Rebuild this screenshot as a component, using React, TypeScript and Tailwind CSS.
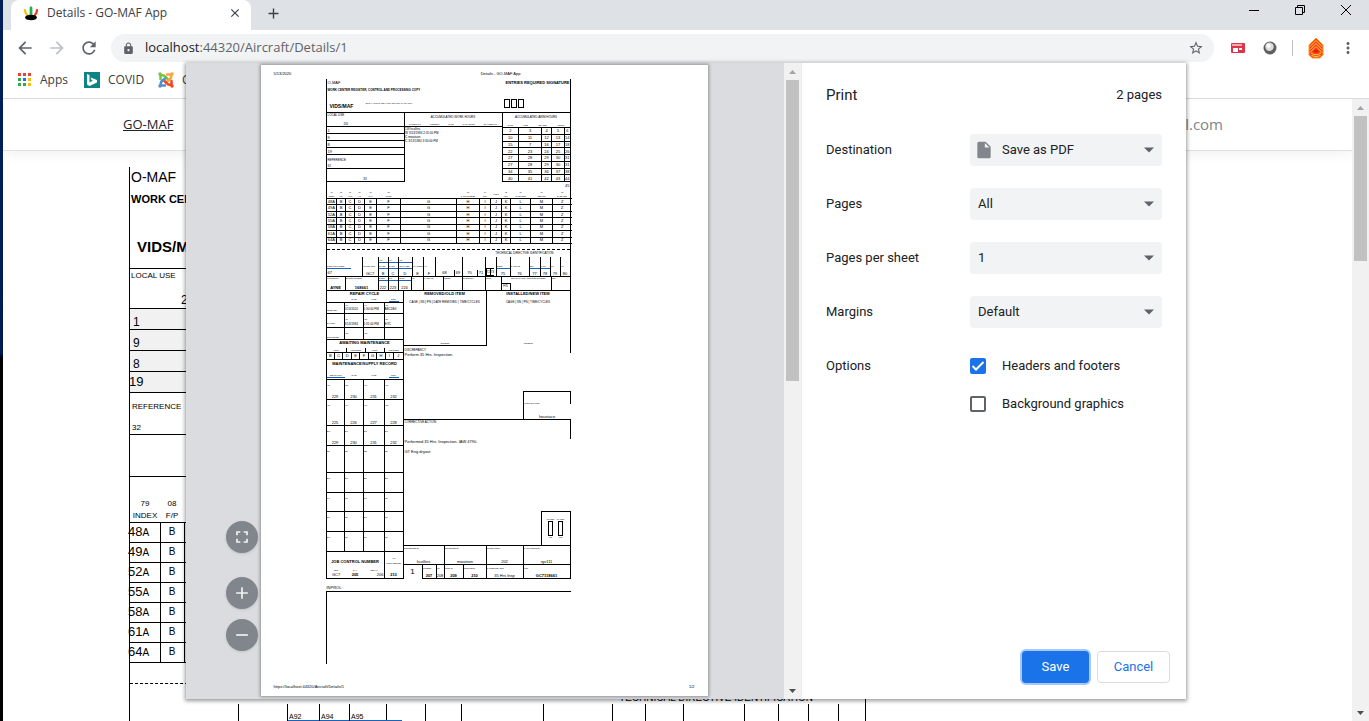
import React from "react";
import { IoMdArrowDropdown } from "react-icons/io";
import { MdArrowBack, MdArrowForward, MdRefresh, MdLock, MdStarBorder, MdMoreVert, MdFullscreen, MdAdd, MdRemove, MdInsertDriveFile, MdClose } from "react-icons/md";

const indexRows = ["48", "49", "52", "55", "58", "61", "64"];
const letters = ["B", "C", "D", "E", "F", "G", "H", "I", "J", "K", "L", "M", "Z"];
const indexHeads = [
  ["79", "INDEX"], ["08", "F/P"], ["09", "AWP"], ["10", "A/T"], ["11", "MAL"], ["12", "MFGR"], ["", ""],
  ["13", "PART NUMBER"], ["14", "QTY"], ["", "PROJ"], ["15", "PRI"], ["16", "DATE ORD"], ["17", "REQ NO"], ["18", "DATE REC"],
];
const indexWidths = ["w-[10px]", "w-[9px]", "w-[9px]", "w-[10px]", "w-[12px]", "w-[24px]", "w-[56px]", "w-[23px]", "w-[11px]", "w-[11px]", "w-[9px]", "w-[20px]", "w-[22px]", "w-[19px]"];
const hours = [
  [2, 3, 4, 5, 6], [10, 11, 12, 13, 14], [15, 7, 16, 17, 18], [22, 23, 24, 25, 26],
  [27, 28, 29, 30, 31], [27, 28, 29, 30, 31], [34, 35, 36, 37, 38], [40, 41, 42, 43, 44],
];
const supplyRows: { height: string; labels: string[]; values: string[] }[] = [
  { height: "h-[20px]", labels: ["A54", "A55", "A61", "A62"], values: ["229", "230", "231", "232"] },
  { height: "h-[26px]", labels: ["A63", "A64", "A71", "A72"], values: ["225", "226", "227", "228"] },
  { height: "h-[20px]", labels: ["208", "209", "210", "217"], values: ["229", "230", "231", "232"] },
  { height: "h-[27px]", labels: ["220", "221", "225", "226"], values: [] },
  { height: "h-[20px]", labels: ["218", "219", "227", "221"], values: [] },
  { height: "h-[19px]", labels: ["244", "245", "246", "250"], values: [] },
  { height: "h-[20px]", labels: ["256", "257", "261", "206"], values: [] },
  { height: "h-[20px]", labels: ["208", "209", "210", "217"], values: [] },
];

function Field({ label, sub, value, className = "", blue = false, strong = false }: { label?: string; sub?: string; value?: string; className?: string; blue?: boolean; strong?: boolean }) {
  return (
    <div className={`flex min-w-0 flex-col justify-between overflow-hidden border-black ${className}`}>
      <span className={`text-[2px] leading-[3px] ${blue ? "border-b border-[#1565c0]" : ""}`}>{label}</span>
      {sub && <span className="border-b border-[#1565c0] text-[2px] leading-[3px]">{sub}</span>}
      <span className={`text-center text-[4px] leading-[5px] ${strong ? "font-bold" : ""}`}>{value}</span>
    </div>
  );
}

function FormHead() {
  return (
    <div className="flex h-[33px] flex-col border-x border-black pl-px">
      <div className="flex h-[7px] items-center justify-between text-[4px]">
        <span>O-MAF</span>
        <span className="font-bold">ENTRIES REQUIRED SIGNATURE</span>
      </div>
      <div className="flex h-[8px] items-center text-[3px] font-bold">WORK CENTER REGISTER, CONTROL AND PROCESSING COPY</div>
      <div className="flex h-[18px] items-center pl-[2px]">
        <span className="w-9 pt-2 text-[5px] font-bold">VIDS/MAF</span>
        <span className="flex-1 text-[2px]">OPNAV 4790/60 (REV. 5-89) S/N 0107-LF-060-6000</span>
        <div className="mr-[46px] flex gap-px">
          {[1, 2, 3].map((n) => <span key={n} className="h-[9px] w-[6px] border border-black" />)}
        </div>
      </div>
    </div>
  );
}

function LocalUse() {
  return (
    <div className="grid grid-cols-[79px_97px_1fr] border-t border-black">
      <div className="h-[69px] border-x border-black">
        <div className="flex h-[14px] flex-col justify-between border-b border-black pl-px">
          <span className="text-[3px] leading-[4px]">LOCAL USE</span>
          <span className="pl-4 text-[4px] leading-[5px]">20</span>
        </div>
        {["1", "9", "8", "19"].map((n) => (
          <div key={n} className="h-[7px] border-b border-black pl-px text-[4px] leading-[7px]">{n}</div>
        ))}
        <div className="flex h-[14px] flex-col justify-between border-b border-black pl-px">
          <span className="pt-1 text-[3px] leading-[3px]">REFERENCE</span>
          <span className="text-[3px] leading-[4px]">32</span>
        </div>
        <div className="flex h-[13px] items-end justify-center border-b border-black text-[3px] leading-[4px]">33</div>
      </div>
      <div>
        <div className="flex h-[14px] flex-col justify-between border-b border-black text-center">
          <span className="pt-[2px] text-[3px] leading-[4px]">ACCUMULATED WORK HOURS</span>
          <span className="flex justify-around text-[2px] leading-[4px]"><i>NAME/SHIFT</i><i>TOOLBOX</i><i>DATE</i><i>MAN-HOURS</i><i>ELAPSED M/T</i></span>
        </div>
        <p className="text-[3px] leading-[4px]">CW hcollins<br />IW 3/13/1984 2:31:00 PM<br />IC mwatson<br />IC 3/13/1984 3:30:00 PM</p>
      </div>
      <div className="border-x border-black">
        <div className="flex h-[14px] flex-col justify-between text-center">
          <span className="pt-[2px] text-[3px] leading-[4px]">ACCUMULATED AWM HOURS</span>
          <span className="flex justify-around text-[2px] leading-[4px]"><i>DATE</i><i>TIME</i><i>REASON</i><i>HOURS</i></span>
        </div>
        <table className="h-[55px] w-full table-fixed border-collapse text-[4px] leading-[5px]">
          <colgroup><col className="w-[16px]" /><col className="w-[23px]" /><col className="w-[10px]" /><col className="w-[13px]" /><col /></colgroup>
          <tbody>
            {hours.map((row, i) => (
              <tr key={i}>{row.map((n, j) => <td key={j} className="overflow-hidden border-y border-r border-black p-0 text-center last:border-r-0">{n}</td>)}</tr>
            ))}
          </tbody>
        </table>
      </div>
    </div>
  );
}

function IndexTable() {
  return (
    <div className="border-x border-black">
      <div className="h-[8px] text-right text-[4px] leading-[7px]">45</div>
      <table className="h-[54px] w-full table-fixed border-collapse text-center text-[4px] leading-[4px]">
        <colgroup>{indexWidths.map((w, i) => <col key={i} className={w} />)}</colgroup>
        <thead>
          <tr className="h-[8px]">
            {indexHeads.map(([n, t], i) => (
              <th key={i} className="p-0 text-[2px] leading-[4px] font-normal"><div>{n}</div><div>{t}</div></th>
            ))}
          </tr>
        </thead>
        <tbody>
          {indexRows.map((r) => (
            <tr key={r}>
              <td className="border-y border-r border-black p-0">{r}A</td>
              {letters.map((l) => <td key={l} className="border-y border-r border-black p-0 last:border-r-0">{l}</td>)}
            </tr>
          ))}
        </tbody>
      </table>
    </div>
  );
}

function Directive() {
  return (
    <div className="border-x border-black">
      <div className="h-[6px] border-b border-dashed border-black" />
      <div className="h-[7px] pr-4 text-right text-[3px] leading-[7px]">TECHNICAL DIRECTIVE IDENTIFICATION</div>
      <div className="grid h-[20px] grid-cols-[36px_16px_10px_10px_14px_11px_12px_27px_23px_11px_14px_19px_11px_10px_10px_1fr] border-b border-black [&>*]:border-r [&>*:last-child]:border-r-0">
        <div className="flex flex-col justify-end border-black">
          <span className="w-6 border-b border-[#1565c0] text-[2px] leading-[3px]">WORK UNIT CODE</span>
          <span className="pl-px text-[4px] leading-[7px]">67</span>
        </div>
        <Field label="ACTION ORG" value="GC7" className="pt-2" />
        <Field label="A92" sub="TRANS" value="B" blue className="pt-[2px]" />
        <Field label="A94" sub="MAINT" value="C" blue className="pt-[2px]" />
        <Field label="A95" sub="ACT TAKEN" value="D" blue className="pt-[2px]" />
        <Field label="MAL CODE" value="E" className="pt-2" />
        <Field label="A/T" value="F" className="pt-2" />
        <div className="flex items-end border-black text-center text-[4px] leading-[6px]"><span className="flex-1">68</span><span className="w-2 border-l border-black">69</span></div>
        <div className="flex items-end border-black text-center text-[4px] leading-[6px]"><span className="flex-1">70</span><span className="w-2 border-l border-black">71</span></div>
        <div className="flex items-end border-black text-[3px] leading-[6px]"><span className="border border-black">72</span><span className="border-y border-black">73</span></div>
        <Field label="CODE" value="75" blue className="pt-2" />
        <Field label="BASIC NO" value="76" className="pt-2" />
        <Field label="REV" value="77" blue className="pt-2" />
        <Field label="PART" value="78" blue className="pt-2" />
        <Field label="KIT" value="79" className="pt-2" />
        <Field label="KIT" value="80" className="pt-2" />
      </div>
      <div className="grid h-[13px] grid-cols-[19px_33px_10px_10px_13px_12px_20px_19px_23px_16px_9px_41px_1fr] [&>*]:border-r [&>*:last-child]:border-r-0">
        <Field label="TYPE EQUIP" value="AYNE" strong />
        <Field label="BU/SER NUMBER" value="168661" strong />
        <Field label="DISCD" value="222" blue />
        <Field label="T/M" value="223" blue />
        <Field label="POSIT" value="224" blue />
        <Field label="FID" />
        <Field label="SAFETY/EI" />
        <Field label="METER" />
        <Field label="INVENTORY" />
        <Field label="PERM" />
        <div className="mt-[6px] border-t border-black text-center text-[3px] leading-[5px]">F/S</div>
        <Field label="REPAIR CYCLE / POSITION NUMBER" />
        <Field label="JCN" />
      </div>
    </div>
  );
}

const fourCols = "grid grid-cols-[18px_19px_21px_1fr] border-b border-black [&>*]:border-r [&>*:last-child]:border-r-0";

function LeftColumn() {
  return (
    <div className="border-x border-black">
      <div className="flex h-[12px] flex-col justify-between border-b border-black text-center">
        <b className="text-[4px] leading-[6px]">REPAIR CYCLE</b>
        <div className="grid grid-cols-[18px_19px_21px_1fr] text-[2px] leading-[3px]"><i /><i>DATE</i><i>TIME</i><i className="mx-1 border-b border-[#1565c0]">EOC</i></div>
      </div>
      <div className={`h-[11px] ${fourCols}`}>
        <Field label="RECEIVED" className="pt-[6px]" />
        <div className="border-black text-[3px] leading-[5px]"><span className="block text-[2px] leading-[4px]">A10</span>5/13/2020</div>
        <div className="border-black text-[3px] leading-[5px]"><span className="block text-[2px] leading-[4px]">A14</span>1:30:00 PM</div>
        <div className="border-black text-[3px] leading-[5px]"><span className="block text-[2px] leading-[4px]">A15</span>ABCDE4</div>
      </div>
      <div className={`h-[14px] ${fourCols}`}>
        <Field label="IN WORK" className="pt-2" />
        <div className="border-black pt-1 text-[3px] leading-[6px]"><span className="block text-[2px] leading-[3px]">A19</span>3/13/1984</div>
        <div className="border-black pt-1 text-[3px] leading-[6px]"><span className="block text-[2px] leading-[3px]">A23</span>1:31:00 PM</div>
        <div className="border-black pt-1 text-[3px] leading-[6px]"><span className="block text-[2px] leading-[3px]">A27</span>EOC</div>
      </div>
      <div className={`h-[12px] ${fourCols}`}>
        <Field label="COMPLETED" className="pt-2" /><Field label="A28" className="pt-1" /><Field label="A32" className="pt-1" /><Field />
      </div>
      <div className="flex h-[20px] flex-col border-b border-black text-center">
        <b className="text-[4px] leading-[6px]">AWAITING MAINTENANCE</b>
        <div className="grid flex-1 grid-cols-4 items-end text-[2px] leading-[4px]"><i>HOUR</i><i className="border-l border-black">HRS/CODE</i><i className="border-l border-black">HOUR</i><i className="border-l border-black">HRS/CODE</i></div>
        <div className="grid h-[7px] grid-cols-9 text-[4px] leading-[6px]">
          {["B", "C", "D", "E", "F", "G", "H", "I", "J"].map((c) => <span key={c} className="border-t border-r border-black last:border-r-0">{c}</span>)}
        </div>
      </div>
      <div className="flex h-[20px] flex-col justify-between border-b border-black text-center">
        <b className="text-[4px] leading-[8px] whitespace-nowrap">MAINTENANCE/SUPPLY RECORD</b>
        <div className="grid grid-cols-[18px_19px_21px_1fr] pb-px text-[2px] leading-[3px]"><i className="border-b border-[#1565c0]">JOB STATUS</i><i>DATE</i><i>TIME</i><i className="mx-1 border-b border-[#1565c0]">EOC</i></div>
      </div>
      {supplyRows.map((r, i) => (
        <div key={i} className={`${r.height} ${fourCols}`}>
          {r.labels.map((l, j) => <Field key={j} label={l} value={r.values[j]} className="pt-1" />)}
        </div>
      ))}
      <div className="grid h-[27px] grid-cols-[58px_1fr] border-b border-black">
        <div className="flex flex-col justify-end border-r border-black text-center">
          <span className="pb-1 text-[4px] leading-[6px] font-semibold whitespace-nowrap">JOB CONTROL NUMBER</span>
          <div className="grid grid-cols-3 text-[2px] leading-[3px]"><i>ORG</i><i>DAY</i><i>SERIAL</i></div>
          <div className="grid grid-cols-3 text-[4px] leading-[6px]"><span>GC7</span><b>205</b><span className="text-right">206</span></div>
        </div>
        <div className="flex flex-col justify-between pt-1 text-center">
          <span className="text-[2px] leading-[5px]">A79<br />WORK CENTER</span>
          <b className="text-[4px] leading-[6px]">213</b>
        </div>
      </div>
    </div>
  );
}

function RightColumn() {
  return (
    <div className="flex flex-col">
      <div className="grid h-[55px] grid-cols-[83px_1fr] items-start">
        <div className="flex h-[55px] flex-col items-center border-r border-b border-black">
          <b className="text-[4px] leading-[6px]">REMOVED/OLD ITEM</b>
          <span className="pt-[3px] text-[3px] leading-[4px]">CAGE | SN | PN | DATE REMOVED | TIME/CYCLES</span>
          <span className="mt-auto text-[2px] leading-[3px]">ADDRESS</span>
        </div>
        <div className="flex h-[62px] flex-col items-center border-r border-black">
          <b className="text-[4px] leading-[6px]">INSTALLED/NEW ITEM</b>
          <span className="pt-[3px] text-[3px] leading-[4px]">CAGE | SN | PN | TIME/CYCLES</span>
          <span className="mt-auto pb-2 text-[2px] leading-[3px]">ADDRESS</span>
        </div>
      </div>
      <div className="flex h-[74px] flex-col justify-between border-b border-black">
        <div className="pt-[2px] pl-px text-[4px] leading-[6px]"><span className="block text-[3px] leading-[4px]">DISCREPANCY</span>Perform 35 Hrs. Inspection.</div>
        <div className="flex h-[28px] w-12 flex-col justify-between self-end border-t border-l border-black">
          <span className="h-3 border-r border-black pt-[10px] text-[2px] leading-[2px]">PILOT/INITIATOR</span>
          <span className="text-center text-[4px] leading-[5px]">houstace</span>
        </div>
      </div>
      <div className="flex h-[125px] flex-col">
        <div className="h-[19px] border-r border-black pl-px text-[3px] leading-[5px]">CORRECTIVE ACTION</div>
        <p className="pl-px text-[4px] leading-[5px]">Performed 35 Hrs. Inspection. IAW 4790.<br /><br />GT Eng dryout</p>
        <div className="mt-auto flex h-[34px] w-[30px] items-center justify-center gap-1 self-end border border-b-0 border-black text-center text-[2px] leading-[3px]">
          {["QT REQ", "QA REQ"].map((t) => (
            <div key={t} className="flex w-[6px] flex-col items-center"><span className="whitespace-nowrap">{t}</span><span className="h-[15px] w-[5px] border border-black" /><span>NO</span></div>
          ))}
        </div>
      </div>
      <div className="grid h-[20px] grid-cols-[41px_42px_37px_1fr] border-y border-r border-black [&>*]:border-r [&>*:last-child]:border-r-0">
        <Field label="CORRECTED BY" value="hcollins" className="pt-px" />
        <Field label="INSPECTED BY" value="mwatson" className="pt-px" />
        <Field label="SUPERVISOR" value="202" className="pt-px" />
        <Field label="MAINT CONTROL" value="rgv111" className="pt-px" />
      </div>
      <div className="flex h-[14px]">
        <span className="w-[18px] text-center text-[8px] leading-[14px]">1</span>
        <div className="grid flex-1 grid-cols-[15px_8px_19px_23px_37px_1fr] border-r border-b border-black [&>*]:border-r [&>*:last-child]:border-r-0">
          <Field label="NUMBER" value="207" strong className="border-l pt-[2px]" />
          <Field label="PRI" value="208" className="pt-[2px]" />
          <Field label="TURN-IN" value="209" strong className="pt-[2px]" />
          <Field label="DOCUMENT" value="210" strong className="pt-[2px]" />
          <Field label="SYSTEM/REASON" value="35 Hrs Insp" className="pt-[2px]" />
          <Field label="MCN" value="GC7118661" strong className="pt-[2px]" />
        </div>
      </div>
    </div>
  );
}

function Paper() {
  return (
    <div className="mt-[2px] flex w-[447px] flex-col bg-white font-['Liberation_Sans',sans-serif] whitespace-nowrap text-black shadow-[0_0_3px_1px_#8f9196]">
      <header className="flex h-[14px] items-center pt-1 pr-[187px] pl-[13px] text-[4px]"><span className="flex-1">5/13/2020</span><span>Details - GO-MAF App</span></header>
      <div className="ml-[65px] w-[245px] [&_i]:not-italic">
        <FormHead />
        <LocalUse />
        <IndexTable />
        <Directive />
        <div className="grid grid-cols-[78px_1fr] border-t border-black">
          <LeftColumn />
          <RightColumn />
        </div>
        <div className="pt-[6px] pl-px text-[4px] leading-[6px]">INPROL:</div>
        <div className="h-[73px] border-t border-l border-black" />
      </div>
      <footer className="mt-auto flex h-[12px] justify-between px-[13px] text-[4px] leading-[5px]"><span>https://localhost:44320/Aircraft/Details/1</span><span>1/2</span></footer>
    </div>
  );
}

function Scrollbar({ thumb, first }: { thumb: string; first: string }) {
  return (
    <div className="flex w-[17px] shrink-0 flex-col items-center bg-[#f1f1f1]">
      <svg className={`h-[17px] w-[9px] shrink-0 ${first}`} viewBox="0 0 9 17"><path d="M1 11h7L4.500 7z" fill="currentColor" /></svg>
      <div className={`w-[13px] shrink-0 bg-[#c1c1c1] ${thumb}`} />
      <svg className="mt-auto h-[17px] w-[9px] shrink-0 text-[#505050]" viewBox="0 0 9 17"><path d="M1 7h7l-3.500 4z" fill="currentColor" /></svg>
    </div>
  );
}

function Choice({ id, label, value, file = false }: { id: string; label: string; value: string; file?: boolean }) {
  return (
    <div className="grid grid-cols-[144px_1fr] items-center">
      <label htmlFor={id}>{label}</label>
      <div className="relative">
        {file && <MdInsertDriveFile className="pointer-events-none absolute top-[6px] left-1 size-5 text-[#80868b]" />}
        <select id={id} className={`h-8 w-full appearance-none rounded bg-[#f1f3f4] pr-6 ${file ? "pl-8" : "pl-2"}`}><option>{value}</option></select>
        <IoMdArrowDropdown className="pointer-events-none absolute top-[6px] right-[3px] size-5 text-[#5f6368]" />
      </div>
    </div>
  );
}

function Check({ label, checked = false }: { label: string; checked?: boolean }) {
  return (
    <label className="flex items-center gap-4 leading-5">
      <span className="relative size-4">
        <input type="checkbox" defaultChecked={checked} className="peer block size-4 appearance-none rounded-xs border-2 border-[#5f6368] checked:border-[#1a73e8] checked:bg-[#1a73e8]" />
        <svg className="pointer-events-none absolute inset-0 hidden size-4 peer-checked:block" viewBox="0 0 16 16" fill="none" stroke="#fff" strokeWidth="2"><path d="M2.500 8l3.500 3.500L13.500 4" /></svg>
      </span>
      {label}
    </label>
  );
}

const roundButton = "flex size-8 items-center justify-center rounded-full bg-[#80868b] text-[#f1f3f4] shadow";

function PrintDialog() {
  return (
    <div className="pointer-events-none absolute inset-x-0 top-[63px] flex justify-center">
      <section role="dialog" aria-label="Print" className="pointer-events-auto flex h-[calc(100vh-85px)] w-[1000px] bg-white font-[Roboto,sans-serif] text-[13px] text-[#202124] shadow-[0_1px_4px_1px_#00000066]">
        <div className="relative flex flex-1 justify-center bg-[#dadce0] pr-[2px] pb-[3px]">
          <Paper />
          <div className="absolute bottom-12 left-10 flex flex-col gap-[10px]">
            <button aria-label="Fit to page" className={`mb-[14px] ${roundButton}`}><MdFullscreen className="size-5" /></button>
            <button aria-label="Zoom in" className={roundButton}><MdAdd className="size-5" /></button>
            <button aria-label="Zoom out" className={roundButton}><MdRemove className="size-5" /></button>
          </div>
        </div>
        <Scrollbar thumb="h-[301px]" first="text-[#a3a3a3]" />
        <div className="flex w-[385px] flex-col border-l border-[#e8eaed]">
          <header className="flex h-[71px] items-start justify-between px-6 pt-[22px]"><h1 className="text-[15px] leading-5">Print</h1><span className="leading-5">2 pages</span></header>
          <form className="flex flex-col gap-[22px] px-6">
            <Choice id="destination" label="Destination" value="Save as PDF" file />
            <Choice id="pages" label="Pages" value="All" />
            <Choice id="sheet" label="Pages per sheet" value="1" />
            <Choice id="margins" label="Margins" value="Default" />
            <div className="grid grid-cols-[144px_1fr]">
              <span className="leading-8">Options</span>
              <div className="flex flex-col gap-[18px] pt-[6px]"><Check label="Headers and footers" checked /><Check label="Background graphics" /></div>
            </div>
          </form>
          <footer className="mt-auto flex justify-end gap-2 p-4">
            <button className="h-8 w-[67px] rounded bg-[#1a73e8] text-white ring-2 ring-[#a8c7fa]">Save</button>
            <button className="h-8 w-[73px] rounded border border-[#dadce0] text-[#1a73e8]">Cancel</button>
          </footer>
        </div>
      </section>
    </div>
  );
}

function BrowserBars() {
  return (
    <header className="shrink-0 text-[#3c4043]">
      <div className="flex h-[30px] bg-[#dee1e6] pl-2">
        <div className="flex w-60 items-center rounded-t-lg bg-white pr-[9px] pb-1 pl-3 text-[12px]">
          <svg className="mr-2 size-4" viewBox="0 0 16 16">
            <path d="M2 5q0 3 2 5" stroke="#fbbc04" strokeWidth="2.200" strokeLinecap="round" fill="none" /><path d="M8 3v7" stroke="#22b14c" strokeWidth="2.800" strokeLinecap="round" /><path d="M14 5q0 3-2 5" stroke="#ea3323" strokeWidth="2.200" strokeLinecap="round" fill="none" />
            <ellipse cx="8" cy="12.500" rx="6" ry="2.800" fill="#000" />
          </svg>
          <span className="flex-1">Details - GO-MAF App</span>
          <button aria-label="Close tab"><MdClose className="size-[14px]" /></button>
        </div>
        <button aria-label="New tab" className="ml-[14px] pb-1"><MdAdd className="size-[17px]" /></button>
        <div className="ml-auto flex gap-[34px] pt-1 pr-[17px] text-black">
          <svg className="size-3" viewBox="0 0 12 12"><path d="M1 6.500h10" stroke="currentColor" /></svg>
          <svg className="size-3" viewBox="0 0 12 12" fill="none" stroke="currentColor"><path d="M1.500 3.500h7v7h-7zM3.500 3.500v-2h7v7h-2" /></svg>
          <svg className="size-3" viewBox="0 0 12 12" stroke="currentColor"><path d="M1 1l10 10M11 1L1 11" /></svg>
        </div>
      </div>
      <nav className="flex h-[36px] items-center gap-3 bg-white pr-3 pl-3 text-[#5f6368]">
        <button aria-label="Back"><MdArrowBack className="size-5" /></button>
        <button aria-label="Forward" className="text-[#bdc1c6]"><MdArrowForward className="size-5" /></button>
        <button aria-label="Reload"><MdRefresh className="size-5" /></button>
        <div className="flex h-7 flex-1 items-center gap-[10px] rounded-full bg-[#f1f3f4] pr-[10px] pl-[11px] text-[13px]">
          <MdLock className="size-[13px]" />
          <span className="flex-1"><span className="text-[#202124]">localhost</span>:44320/Aircraft/Details/1</span>
          <MdStarBorder className="size-4" />
        </div>
        <div className="flex items-center gap-[15px]">
          <svg className="ml-[5px] size-[14px]" viewBox="0 0 14 14"><rect y="2" width="14" height="10" rx="1" fill="#dc3545" /><path d="M1 4h10" stroke="#f5a5ad" strokeWidth="2" /><path d="M2 7h5v4H2zM8 7h3v2H8z" fill="#fff" /></svg>
          <svg className="ml-[3px] size-[14px]" viewBox="0 0 14 14"><circle cx="7" cy="7" r="6.500" fill="#606060" /><circle cx="6.500" cy="5.800" r="4.200" fill="#dedede" /><circle cx="5.500" cy="4.800" r="2" fill="#fff" /></svg>
          <span className="h-4 w-px bg-[#bdc1c6]" />
          <svg className="h-[22px] w-4" viewBox="0 0 16 22"><path d="M8 1l7 7v10l-3.500 3h-7L1 18V8z" fill="#f8401c" stroke="#ff9a1f" strokeWidth="1" /><g fill="none" stroke="#ffd02e" strokeWidth="1"><path d="M2 9.500l6-6 6 6M2 12.500l6-6 6 6M2 15.500l6-6 6 6M3 16q5 3.500 10 0M3.500 18.500q4.500 2.500 9 0" /></g><ellipse cx="8" cy="14" rx="2.500" ry="1.500" fill="#e31b13" /></svg>
          <MdMoreVert className="size-[18px]" />
        </div>
      </nav>
      <div className="flex h-[33px] items-start border-b border-[#d9dbe0] bg-white pt-[5px] pl-[15px] text-[12px]">
        <a href="#apps" className="flex items-center gap-2">
          <svg className="size-[14px]" viewBox="0 0 14 14"><path d="M0 0h3v3H0zM5 0h3v3H5zM10 0h3v3h-3z" fill="#ea4335" /><path d="M0 5h3v3H0zM0 10h3v3H0zM5 10h3v3H5z" fill="#34a853" /><path d="M5 5h3v3H5z" fill="#1a73e8" /><path d="M10 5h3v3h-3zM10 10h3v3h-3z" fill="#fbbc04" /></svg>
          Apps
        </a>
        <a href="#covid" className="ml-4 flex items-center gap-2">
          <svg className="size-4" viewBox="0 0 16 16"><path d="M0 0h16v16H0z" fill="#0c8484" /><path d="M3 2l2.500 1v7.500L9 8.500 7.500 8 6.500 5.500 13 8v2.500L5.500 14 3 12.500z" fill="#fff" /></svg>
          COVID
        </a>
        <a href="#cms" className="ml-[14px] flex items-center gap-2">
          <svg className="size-4" viewBox="0 0 16 16" fill="none" strokeWidth="2.500" strokeLinecap="round"><path d="M2.500 7V3.500q3-1 5 1.500l3 3" stroke="#7ac143" /><path d="M9 2.500h4q1 3-1.500 5l-3.500 3" stroke="#f9a541" /><path d="M13.500 9v3.500q-3 1-5-1.500L6 8.500" stroke="#f44321" /><path d="M7 13.500H3q-1-3 1.500-5L7 6.500" stroke="#5091cd" /><g strokeWidth="3.500"><path d="M2 2h0" stroke="#7ac143" /><path d="M14 2h0" stroke="#f9a541" /><path d="M14 14h0" stroke="#f44321" /><path d="M2 14h0" stroke="#5091cd" /></g></svg>
          C
        </a>
      </div>
    </header>
  );
}

function PageForm() {
  return (
    <div className="mt-4 ml-[126px] w-[737px] shrink-0 border-x border-black font-['Liberation_Sans',sans-serif] whitespace-nowrap text-black">
      <div className="flex h-[101px] flex-col pl-px">
        <span className="text-[14px] leading-5">O-MAF</span>
        <b className="text-[11px] leading-6">WORK CENTER REGISTER, CONTROL AND PROCESSING COPY</b>
        <b className="pt-[26px] pl-[6px] text-[15px] leading-5">VIDS/MAF</b>
      </div>
      <div className="w-[240px] border-t border-r border-black">
        <div className="flex h-[40px] flex-col justify-between border-b border-black pl-px"><span className="text-[8px] leading-[14px]">LOCAL USE</span><span className="pl-[50px] text-[12px] leading-4">20</span></div>
        {["1", "9", "8"].map((n) => <div key={n} className="h-[21px] border-b border-black bg-[#f1f1f1] pt-[3px] pl-[3px] text-[12px] leading-5">{n}</div>)}
        <div className="h-[21px] border-b border-black bg-[#f1f1f1] text-[13px] leading-5"><span className="-ml-px">19</span></div>
        <div className="flex h-[42px] flex-col justify-between border-b border-black pl-[2px] text-[8px]"><span className="pt-2">REFERENCE</span><span>32</span></div>
        <div className="h-[42px] border-b border-black" />
      </div>
      <table className="w-full table-fixed border-collapse text-center text-[12px]">
        <colgroup><col className="w-[30px]" /><col className="w-[24px]" />{letters.slice(1).map((l) => <col key={l} />)}</colgroup>
        <thead>
          <tr className="h-[45px] align-bottom text-[8px] leading-3">
            {indexHeads.map(([n, t], i) => <th key={i} className="p-0 font-normal"><div>{n}</div><div>{t}</div></th>)}
          </tr>
        </thead>
        <tbody>
          {indexRows.map((r) => (
            <tr key={r} className="h-5 leading-4">
              <td className="border-y border-r border-black p-0 text-left"><span className="-ml-[2px] text-[13px] leading-4">{r}</span><span className="text-[10px] leading-4">A</span></td>
              {letters.map((l) => <td key={l} className="border-y border-r border-black p-0 text-[10px] leading-4">{l}</td>)}
            </tr>
          ))}
        </tbody>
      </table>
      <div className="h-[21px] border-b border-dashed border-black" />
      <div className="h-[20px] pr-[52px] text-right text-[10px] leading-[28px]">TECHNICAL DIRECTIVE IDENTIFICATION</div>
      <div className="grid h-[40px] grid-cols-[109px_49px_32px_30px_37px_39px_36px_82px_69px_33px_38px_61px_34px_30px_30px_1fr] text-[7px] leading-[7px] [&>*]:border-r [&>*]:border-black [&>*:last-child]:border-r-0">
        <span /><span />
        <span className="pt-[9px]"><span className="block border-b border-[#1565c0] pl-px">A92</span></span>
        <span className="pt-[9px]"><span className="block border-b border-[#1565c0] pl-px">A94</span></span>
        <span className="pt-[9px]"><span className="-mr-4 block border-b border-[#1565c0] pl-px">A95</span></span>
        <span /><span /><span /><span /><span /><span /><span /><span /><span /><span /><span />
      </div>
    </div>
  );
}

export default function App() {
  return (
    <div className="flex h-screen overflow-hidden bg-white font-['Open_Sans','Noto_Sans',sans-serif]">
      <div className="w-[3px] shrink-0 bg-linear-to-b from-[#001d5c] from-0% via-[#001a55] via-49% to-black to-50%" />
      <div className="relative flex min-w-0 flex-1 flex-col">
        <BrowserBars />
        <div className="flex min-h-0 flex-1">
          <main className="flex min-w-0 flex-1 flex-col overflow-hidden">
            <div className="flex h-[52px] shrink-0 items-center justify-between border-b border-[#dee2e6] pr-[129px] pl-[120px] text-[13px] shadow-[0_4px_12px_#0000000d]">
              <a href="#home" className="text-[#212529] underline">GO-MAF</a>
              <a href="#account" className="text-[15px] text-[#808488]">user@gmail.com</a>
            </div>
            <PageForm />
          </main>
          <Scrollbar thumb="h-[145px]" first="text-[#a3a3a3]" />
        </div>
        <PrintDialog />
      </div>
    </div>
  );
}
